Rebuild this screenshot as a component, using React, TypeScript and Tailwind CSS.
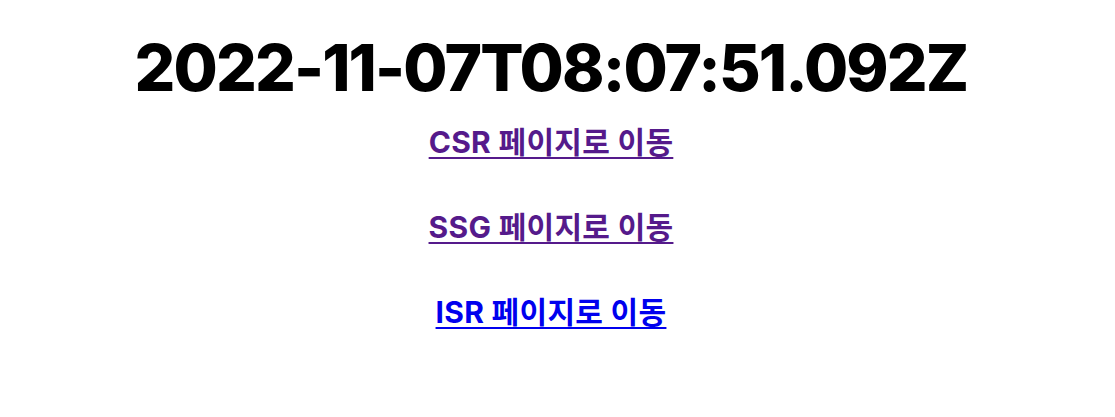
const links = [
  { label: 'CSR 페이지로 이동', visited: true },
  { label: 'SSG 페이지로 이동', visited: true },
  { label: 'ISR 페이지로 이동', visited: false },
];

export default function App() {
  return (
    <div className="flex flex-col items-center bg-white pr-[13px] font-['Inter','Noto_Sans_CJK_KR',sans-serif]">
      <h1 className="mt-[29px] text-[64px] leading-[78px] font-extrabold tracking-[-1.85px] text-black">2022-11-07T08:07:51.092Z</h1>
      <div className="mt-[18px] flex flex-col items-center gap-[51px]">
        {links.map((l) => (
          <a
            key={l.label}
            href="#"
            className={`text-[30px] leading-[34px] font-bold tracking-[0.3px] underline decoration-2 underline-offset-[4px] ${l.visited ? 'text-[#551a8b]' : 'text-[#0000ee]'}`}
          >
            {l.label}
          </a>
        ))}
      </div>
    </div>
  );
}
